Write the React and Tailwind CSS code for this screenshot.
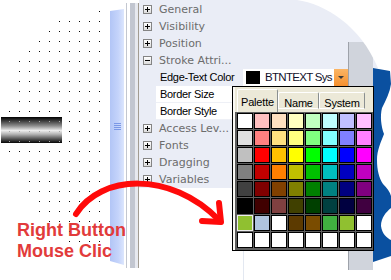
import React from 'react';

const PALETTE = [
  ['#ffffff', '#ffc0c0', '#ffe0c0', '#ffffc0', '#c0ffc0', '#c0ffff', '#c0c0ff', '#ffc0ff'],
  ['#e0e0e0', '#ff8080', '#ffe080', '#ffff80', '#80ff80', '#80ffff', '#8080ff', '#ff80ff'],
  ['#c0c0c0', '#ff0000', '#ffc000', '#ffff00', '#00ff00', '#00ffff', '#0000ff', '#ff00ff'],
  ['#808080', '#c00000', '#ff8000', '#c0c000', '#00c000', '#00c0c0', '#0000c0', '#c000c0'],
  ['#404040', '#800000', '#804000', '#808000', '#008000', '#008080', '#000080', '#800080'],
  ['#000000', '#400000', '#804040', '#404000', '#004000', '#004040', '#000040', '#400040'],
  ['#90c030', '#b0c4de', '#ffffff', '#5c3a00', '#7a4c00', '#40b040', '#90c030', '#ffffff'],
  ['#ffffff', '#ffffff', '#ffffff', '#ffffff', '#ffffff', '#ffffff', '#ffffff', '#ffffff'],
];

// [row y, first dot x]
const DOT_ROWS = [
  [11, 99], [21, 59], [31, 49], [41, 39], [51, 29], [61, 19], [71, 19], [81, 19],
  [91, 19], [101, 19], [111, 9], [121, 9], [131, 9], [141, 9], [151, 9], [161, 19],
  [171, 19], [181, 29], [191, 29], [201, 39], [211, 39], [221, 49], [231, 59], [241, 69],
];

const DotCanvas = () => {
  const dots = [];
  DOT_ROWS.forEach(([y, x0]) => {
    for (let x = x0; x <= 99; x += 10) {
      const onBar = y > 117 && y < 143 && x < 62;
      dots.push(<rect key={`${x}-${y}`} x={x} y={y} width="1" height="1" fill={onBar ? '#a8a8a8' : '#000'} />);
    }
  });
  return (
    <div className="relative w-[110px] h-full shrink-0">
      <div className="absolute left-[1px] top-[117px] w-[61px] h-[26px] bg-[linear-gradient(to_bottom,#000_0%,#383838_14%,#8c8c8c_34%,#ececec_52%,#b4b4b4_66%,#555_84%,#050505_100%)]" />
      <svg className="absolute inset-0" width="110" height="280">{dots}</svg>
    </div>
  );
};

const Scrollbar = () => (
  <div className="flex h-full shrink-0">
    <div className="w-[14px] mt-[9px] h-[256px] pt-[114px] pl-[4px] flex flex-col gap-px bg-[linear-gradient(to_right,#b2c5f6,#c5d4fb_60%,#dce6fd)] [clip-path:polygon(0_2px,14px_0,14px_256px,0_252px)]">
      <span className="w-[7px] h-px bg-[#7b98e6]" />
      <span className="w-[7px] h-px bg-[#7b98e6]" />
      <span className="w-[7px] h-px bg-[#7b98e6]" />
      <span className="w-[7px] h-px bg-[#7b98e6]" />
    </div>
    <div className="w-[2px]" />
    <div className="w-[1px] mt-[3px] h-[265px] bg-[#c3c7d0]" />
    <div className="w-[3px]" />
    <div className="w-[5px] mt-[3px] h-[265px] bg-[#c2c6d0]" />
    <div className="w-[3px] mt-[3px] h-[265px] bg-[#e7e9ef]" />
    <div className="w-[1px] mt-[3px] h-[265px] bg-[#a29c92]" />
  </div>
);

const ExpandBox = ({ open }) => (
  <span className="relative w-[9px] h-[9px] shrink-0 border border-[#848484] bg-[linear-gradient(to_bottom,#fff,#dcdcdc)] flex items-center justify-center">
    <span className="absolute w-[5px] h-px bg-black" />
    {!open && <span className="absolute w-px h-[5px] bg-black" />}
  </span>
);

const Category = ({ label, open }) => (
  <div className="flex h-[17px] items-center pl-[4px] bg-[#eaedf6]">
    <ExpandBox open={open} />
    <span className="ml-[7px] text-[11px] leading-none text-[#6c6c6c] font-['DejaVu_Sans',sans-serif] whitespace-nowrap">{label}</span>
  </div>
);

const SubRow = ({ label }) => (
  <div className="flex h-[17px] bg-[#eaedf6]">
    <div className="w-[17px] shrink-0" />
    <div className="flex-1 flex items-center pl-[4px] bg-white border-b border-[#eef0f6] text-[11px] tracking-[-0.3px] text-black">{label}</div>
  </div>
);

const EdgeRow = () => (
  <div className="flex h-[17px] bg-[#eaedf6]">
    <div className="w-[17px] shrink-0" />
    <div className="w-[87px] shrink-0 flex items-center pl-[4px] text-[11px] tracking-[-0.3px] text-black whitespace-nowrap overflow-hidden">Edge-Text Color</div>
    <div className="w-[91px] shrink-0 flex items-center bg-white overflow-hidden">
      <span className="ml-[3px] w-[14px] h-[13px] shrink-0 bg-black" />
      <span className="ml-[5px] text-[11.5px] tracking-[-0.7px] text-[#10102a] whitespace-nowrap">BTNTEXT Sys</span>
    </div>
    <div className="w-[14px] shrink-0 flex items-center justify-center bg-[linear-gradient(to_bottom,#fbb565,#f5902e)]">
      <span className="w-0 h-0 border-l-[3px] border-r-[3px] border-t-[3px] border-l-transparent border-r-transparent border-t-[#3a3a3a]" />
    </div>
  </div>
);

const PropertyPanel = () => (
  <div className="w-[209px] h-full shrink-0 flex flex-col bg-white">
    <div className="h-[1px] bg-[#eaedf6]" />
    <Category label="General" />
    <Category label="Visibility" />
    <Category label="Position" />
    <Category label="Stroke Attri..." open />
    <EdgeRow />
    <SubRow label="Border Size" />
    <SubRow label="Border Style" />
    <Category label="Access Lev..." />
    <Category label="Fonts" />
    <Category label="Dragging" />
    <Category label="Variables" />
    <div className="flex-1 flex">
      <div className="w-[104px]" />
      <div className="w-px bg-[#e3e8f1]" />
    </div>
  </div>
);

const ColorPopup = () => (
  <div className="absolute left-[232px] top-[86px] border border-black bg-[#ece9d8]">
    <div className="border-l-2 border-[#fbfaf5] flex flex-col">
      <div className="h-[25px] flex items-start pl-[2px] text-[11px] tracking-[-0.2px] text-black">
        <div className="mt-[2px] w-[41px] h-[23px] pt-[4px] text-center bg-[#ece9d8] border-t border-l border-white border-r border-r-[#8a8f90] rounded-t-[2px]">Palette</div>
        <div className="mt-[5px] w-[41px] h-[17px] pt-[2px] text-center border-t border-l border-white border-r border-r-[#8a8f90] border-b border-b-white rounded-t-[2px]">Name</div>
        <div className="mt-[5px] w-[46px] h-[17px] pt-[2px] text-center border-t border-l border-white border-r border-r-[#8a8f90] border-b border-b-white rounded-t-[2px]">System</div>
      </div>
      <div className="w-[138px] grid grid-cols-8 gap-px bg-[#5e5e5e] pt-[1px] pl-[2px] pr-[1px] pb-[2px]">
        {PALETTE.flatMap((row, r) =>
          row.map((c, i) => (
            <div
              key={`${r}-${i}`}
              className={`w-[16px] h-[16px] border ${r === 6 && i === 0 ? 'border-[#ececec]' : 'border-black'}`}
              style={{ backgroundColor: c }}
            />
          ))
        )}
      </div>
    </div>
  </div>
);

const BlueEdge = () => (
  <div className="w-[18px] h-full shrink-0">
    <svg width="18" height="280">
      <rect x="0" y="0" width="18" height="68" fill="#eaedf6" />
      <path
        d="M0 68 L17 71 L18 84 C17 92 13 100 9 108 C7 116 8 126 11 134 C8 142 4 150 4 160 C4 170 6 178 10 184 C14 188 17 192 18 196 L18 208 C13 212 8 218 8 226 C9 234 14 238 18 240 L18 256 L0 262 Z"
        fill="#0a50a0"
      />
    </svg>
  </div>
);

export default function App() {
  return (
    <div className="relative w-[391px] h-[280px] overflow-hidden bg-white flex font-['Liberation_Sans',Arial,sans-serif]">
      <DotCanvas />
      <Scrollbar />
      <PropertyPanel />
      <div className="w-[25px] h-full shrink-0 flex flex-col">
        <div className="h-[42px] bg-[#eaedf6]" />
        <div className="h-[228px] bg-[#d0d4dc] border-l border-[#9ea2aa]" />
      </div>
      <BlueEdge />

      {/* torn top-right corner */}
      <svg className="absolute inset-0 pointer-events-none" width="391" height="280">
        <path d="M297 0 C325 4 360 25 378 68 L391 68 L391 0 Z" fill="#fff" />
      </svg>

      <ColorPopup />

      {/* annotation */}
      <svg className="absolute inset-0 pointer-events-none" width="391" height="280">
        <path d="M76 214 C100 175 170 170 219 220" fill="none" stroke="#ff0a0a" strokeWidth="6" strokeLinecap="round" />
        <polyline points="219,203 221,222 202,221" fill="none" stroke="#ff0a0a" strokeWidth="6" strokeLinecap="round" strokeLinejoin="round" />
      </svg>
      <div className="absolute left-[17px] top-[220px] text-[18px] leading-[21px] font-bold text-[#e23b3b] whitespace-nowrap">
        <div>Right Button</div>
        <div>Mouse Clic</div>
      </div>
    </div>
  );
}
